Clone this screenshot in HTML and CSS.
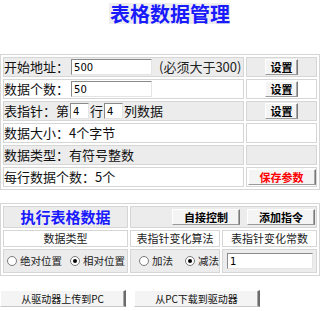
FILE: index.html
```html
<!DOCTYPE html>
<html>
<head>
<meta charset="utf-8">
<link rel="stylesheet" href="styles.css">
</head>
<body>
<div class="page">
  <div class="title-row"><h1 class="title">表格数据管理</h1></div>

  <table class="grid params">
    <colgroup><col class="c-main"><col class="c-side"></colgroup>
    <tr class="gray">
      <td><div class="line">开始地址：<input class="txt wide" value="500"><span class="note">(必须大于300)</span></div></td>
      <td class="act"><button class="btn set">设置</button></td>
    </tr>
    <tr class="white">
      <td><div class="line">数据个数：<input class="txt wide" value="50"></div></td>
      <td class="act"><button class="btn set">设置</button></td>
    </tr>
    <tr class="gray">
      <td><div class="line">表指针：第<input class="txt small" value="4">行<input class="txt small" value="4">列数据</div></td>
      <td class="act"><button class="btn set">设置</button></td>
    </tr>
    <tr class="white">
      <td><div class="line">数据大小：4个字节</div></td>
      <td></td>
    </tr>
    <tr class="gray">
      <td><div class="line">数据类型：有符号整数</div></td>
      <td></td>
    </tr>
    <tr class="white">
      <td><div class="line">每行数据个数：5个</div></td>
      <td class="act"><button class="btn save">保存参数</button></td>
    </tr>
  </table>

  <table class="grid exec">
    <colgroup><col class="e1"><col class="e2"><col class="e3"></colgroup>
    <tr class="gray head">
      <td class="exec-title">执行表格数据</td>
      <td colspan="2"><div class="tools"><button class="btn tool">自接控制</button><button class="btn tool">添加指令</button></div></td>
    </tr>
    <tr class="white labels">
      <td>数据类型</td>
      <td>表指针变化算法</td>
      <td>表指针变化常数</td>
    </tr>
    <tr class="gray opts">
      <td><div class="radios r1"><label class="radio"><span class="dot"></span>绝对位置</label><label class="radio"><span class="dot on"></span>相对位置</label></div></td>
      <td><div class="radios r2"><label class="radio"><span class="dot"></span>加法</label><label class="radio"><span class="dot on"></span>减法</label></div></td>
      <td><input class="txt const" value="1"></td>
    </tr>
  </table>

  <div class="transfer">
    <button class="btn big">从驱动器上传到PC</button>
    <button class="btn big">从PC下载到驱动器</button>
  </div>
</div>
</body>
</html>
```

FILE: styles.css
```css
html, body {
  margin: 0;
  padding: 0;
  background: #ffffff;
}
body {
  font-family: "Noto Sans CJK SC", "DejaVu Sans", sans-serif;
  color: #000;
}
.page {
  width: 323px;
  padding-top: 3px;
}
.title-row {
  display: flex;
  padding-left: 109px;
}
.title {
  margin: 0;
  background: #eeeeee;
  color: #1a1aff;
  font-size: 20px;
  font-weight: bold;
  line-height: 21px;
  height: 21px;
  padding: 0 0 0 1px;
}
.grid {
  width: 320px;
  table-layout: fixed;
  border-collapse: separate;
  border-spacing: 2px;
  border: 1px solid #d6d6d6;
}
.grid td {
  box-sizing: border-box;
  border: 1px solid #d6d6d6;
  padding: 0;
  font-size: 12px;
  line-height: 14px;
}
.params {
  margin-top: 30px;
}
.c-main { width: 241px; }
.c-side { width: 71px; }
.params td {
  height: 20px;
}
tr.gray td { background: #ececec; }
tr.white td { background: #ffffff; }
.line {
  display: flex;
  align-items: center;
  font-size: 13px;
  line-height: 18px;
  height: 18px;
  white-space: nowrap;
  color: #111;
}
.note {
  margin-left: 7px;
  color: #222;
}
.txt {
  box-sizing: border-box;
  height: 16px;
  margin: 0;
  padding: 0 0 0 2px;
  background: #fff;
  border: 1px solid;
  border-color: #8a8a8a #e4e4e4 #e4e4e4 #8a8a8a;
  font-family: "DejaVu Sans", sans-serif;
  font-size: 10px;
  color: #000;
  outline: none;
}
.txt.wide {
  width: 81px;
  margin-left: 2px;
}
.txt.small {
  width: 19px;
  margin: 0 1px;
}
.btn {
  box-sizing: border-box;
  margin: 0;
  padding: 0;
  background: #f4f4f4;
  border: 1px solid;
  border-color: #ffffff #7a7a7a #9a9a9a #ffffff;
  box-shadow: inset -1px 0 0 #a8a8a8;
  font-family: "Noto Sans CJK SC", sans-serif;
  color: #000;
  cursor: default;
  white-space: nowrap;
}
.act .btn {
  display: block;
  margin: 0 auto;
}
.btn.set {
  width: 33px;
  height: 16px;
  font-size: 11px;
  font-weight: bold;
  line-height: 14px;
}
.btn.save {
  width: 68px;
  height: 16px;
  font-size: 11px;
  font-weight: bold;
  line-height: 14px;
  color: #ff0000;
}
.exec {
  margin-top: 13px;
}
.e1 { width: 125px; }
.e2 { width: 90px; }
.e3 { width: 95px; }
.head td {
  height: 22px;
}
.exec-title {
  text-align: center;
}
.grid td.exec-title {
  color: #1a1aff;
  font-size: 15px;
  font-weight: bold;
  line-height: 20px;
}
.tools {
  display: flex;
  justify-content: flex-end;
  gap: 7px;
  padding-right: 1px;
}
.btn.tool {
  width: 68px;
  height: 16px;
  font-size: 11px;
  font-weight: bold;
  line-height: 14px;
}
.grid .labels td {
  height: 17px;
  text-align: center;
  font-size: 11px;
  line-height: 15px;
  color: #222;
}
.opts td {
  height: 24px;
}
.radios {
  display: flex;
  align-items: center;
  font-size: 10.5px;
  line-height: 16px;
  color: #222;
  white-space: nowrap;
}
.r1 {
  gap: 8px;
  padding-left: 3px;
}
.r2 {
  gap: 12px;
  padding-left: 8px;
}
.radio {
  display: flex;
  align-items: center;
  gap: 3px;
}
.dot {
  box-sizing: border-box;
  width: 10px;
  height: 10px;
  border-radius: 50%;
  border: 1px solid #7a7a7a;
  background: #fff;
  position: relative;
  display: inline-block;
}
.dot.on::after {
  content: "";
  position: absolute;
  left: 2px;
  top: 2px;
  width: 4px;
  height: 4px;
  border-radius: 50%;
  background: #000;
}
.txt.const {
  display: block;
  width: 86px;
  margin-left: 4px;
  font-size: 10px;
}
.transfer {
  display: flex;
  gap: 8px;
  margin-top: 14px;
}
.btn.big {
  width: 126px;
  height: 17px;
  font-size: 10px;
  font-weight: normal;
  line-height: 15px;
  color: #111;
  border-color: #ffffff #6a6a6a #c8c8c8 #ffffff;
  border-width: 1px 2px 1px 1px;
}
```
